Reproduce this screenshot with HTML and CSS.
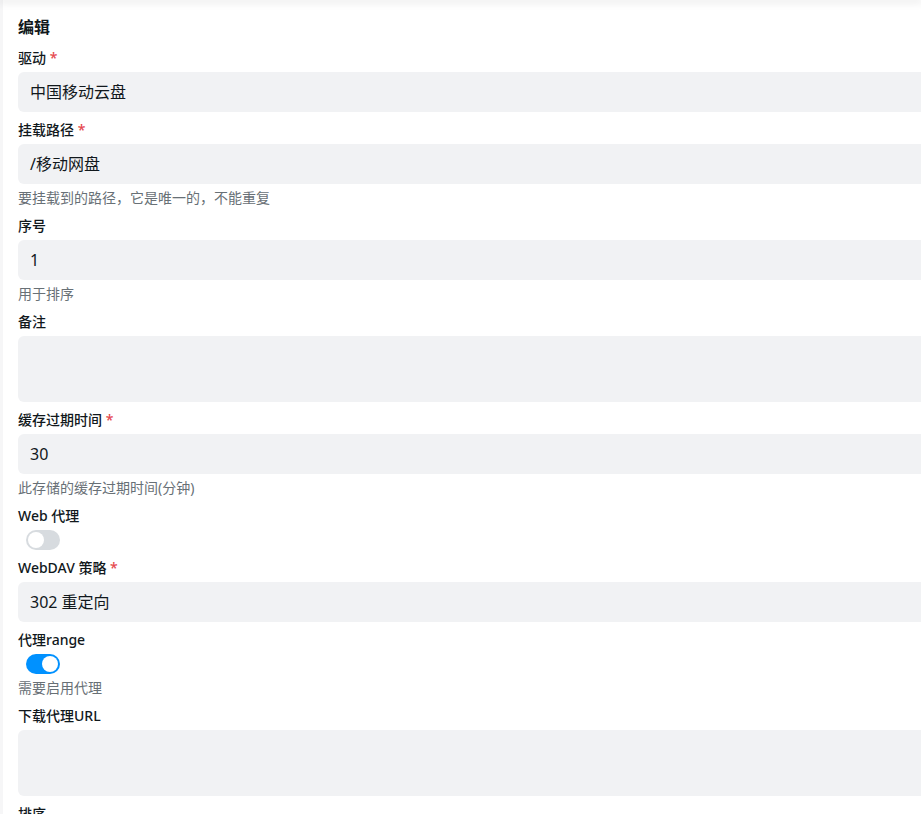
FILE: index.html
```html
<!DOCTYPE HTML>
<html>

<head>
    <meta charset="UTF-8">
    <title>编辑存储</title>
    <link rel="stylesheet" href="styles.css">
</head>

<body>
    <div class="topbar"></div>
    <div class="page">
        <h2 class="title">编辑</h2>
        <div class="form">
            <div class="field">
                <label class="label">驱动 <span class="req">*</span></label>
                <div class="input">中国移动云盘</div>
            </div>
            <div class="field">
                <label class="label">挂载路径 <span class="req">*</span></label>
                <div class="input">/移动网盘</div>
                <p class="help">要挂载到的路径，它是唯一的，不能重复</p>
            </div>
            <div class="field">
                <label class="label">序号</label>
                <div class="input">1</div>
                <p class="help">用于排序</p>
            </div>
            <div class="field">
                <label class="label">备注</label>
                <div class="input textarea"></div>
            </div>
            <div class="field">
                <label class="label">缓存过期时间 <span class="req">*</span></label>
                <div class="input">30</div>
                <p class="help">此存储的缓存过期时间(分钟)</p>
            </div>
            <div class="field">
                <label class="label">Web 代理</label>
                <span class="switch"><span class="thumb"></span></span>
            </div>
            <div class="field">
                <label class="label">WebDAV 策略 <span class="req">*</span></label>
                <div class="input">302 重定向</div>
            </div>
            <div class="field">
                <label class="label">代理range</label>
                <span class="switch on"><span class="thumb"></span></span>
                <p class="help">需要启用代理</p>
            </div>
            <div class="field">
                <label class="label">下载代理URL</label>
                <div class="input textarea"></div>
            </div>
            <div class="field">
                <label class="label">排序</label>
                <div class="input"></div>
            </div>
        </div>
    </div>
</body>

</html>
```

FILE: styles.css
```css
html, body {
    margin: 0;
    height: 100%;
    overflow: hidden;
    background: #ffffff;
}

body {
    font-family: "Noto Sans", "Noto Sans CJK SC", sans-serif;
    color: #11181c;
}

.topbar {
    height: 0;
    box-shadow: 0 0 8px 2px rgba(0, 0, 0, 0.12);
    position: relative;
    z-index: 1;
}

.page {
    border-left: 3px solid #f6f6f7;
    padding: 12px 0 0 15px;
    width: 1000px;
    height: 100%;
}

.title {
    margin: 0 0 6px;
    font-size: 16px;
    line-height: 30px;
    font-weight: 700;
}

.form {
    display: flex;
    flex-direction: column;
    gap: 8px;
}

.field {
    display: flex;
    flex-direction: column;
    align-items: flex-start;
    gap: 4px;
}

.label {
    font-size: 14px;
    line-height: 20px;
    font-weight: 500;
}

.req {
    color: #e5484d;
}

.input {
    box-sizing: border-box;
    width: 100%;
    height: 40px;
    padding: 0 12px;
    border-radius: 6px;
    background: #f1f2f4;
    font-size: 16px;
    line-height: 40px;
}

.textarea {
    height: 66px;
}

.help {
    margin: 0;
    font-size: 14px;
    line-height: 20px;
    color: #687076;
}

.switch {
    display: flex;
    align-items: center;
    box-sizing: border-box;
    margin-left: 8px;
    width: 34px;
    height: 20px;
    padding: 2px;
    border-radius: 10px;
    background: #d7dbdf;
}

.switch .thumb {
    width: 16px;
    height: 16px;
    border-radius: 50%;
    background: #ffffff;
}

.switch.on {
    justify-content: flex-end;
    background: #0091ff;
}
```
